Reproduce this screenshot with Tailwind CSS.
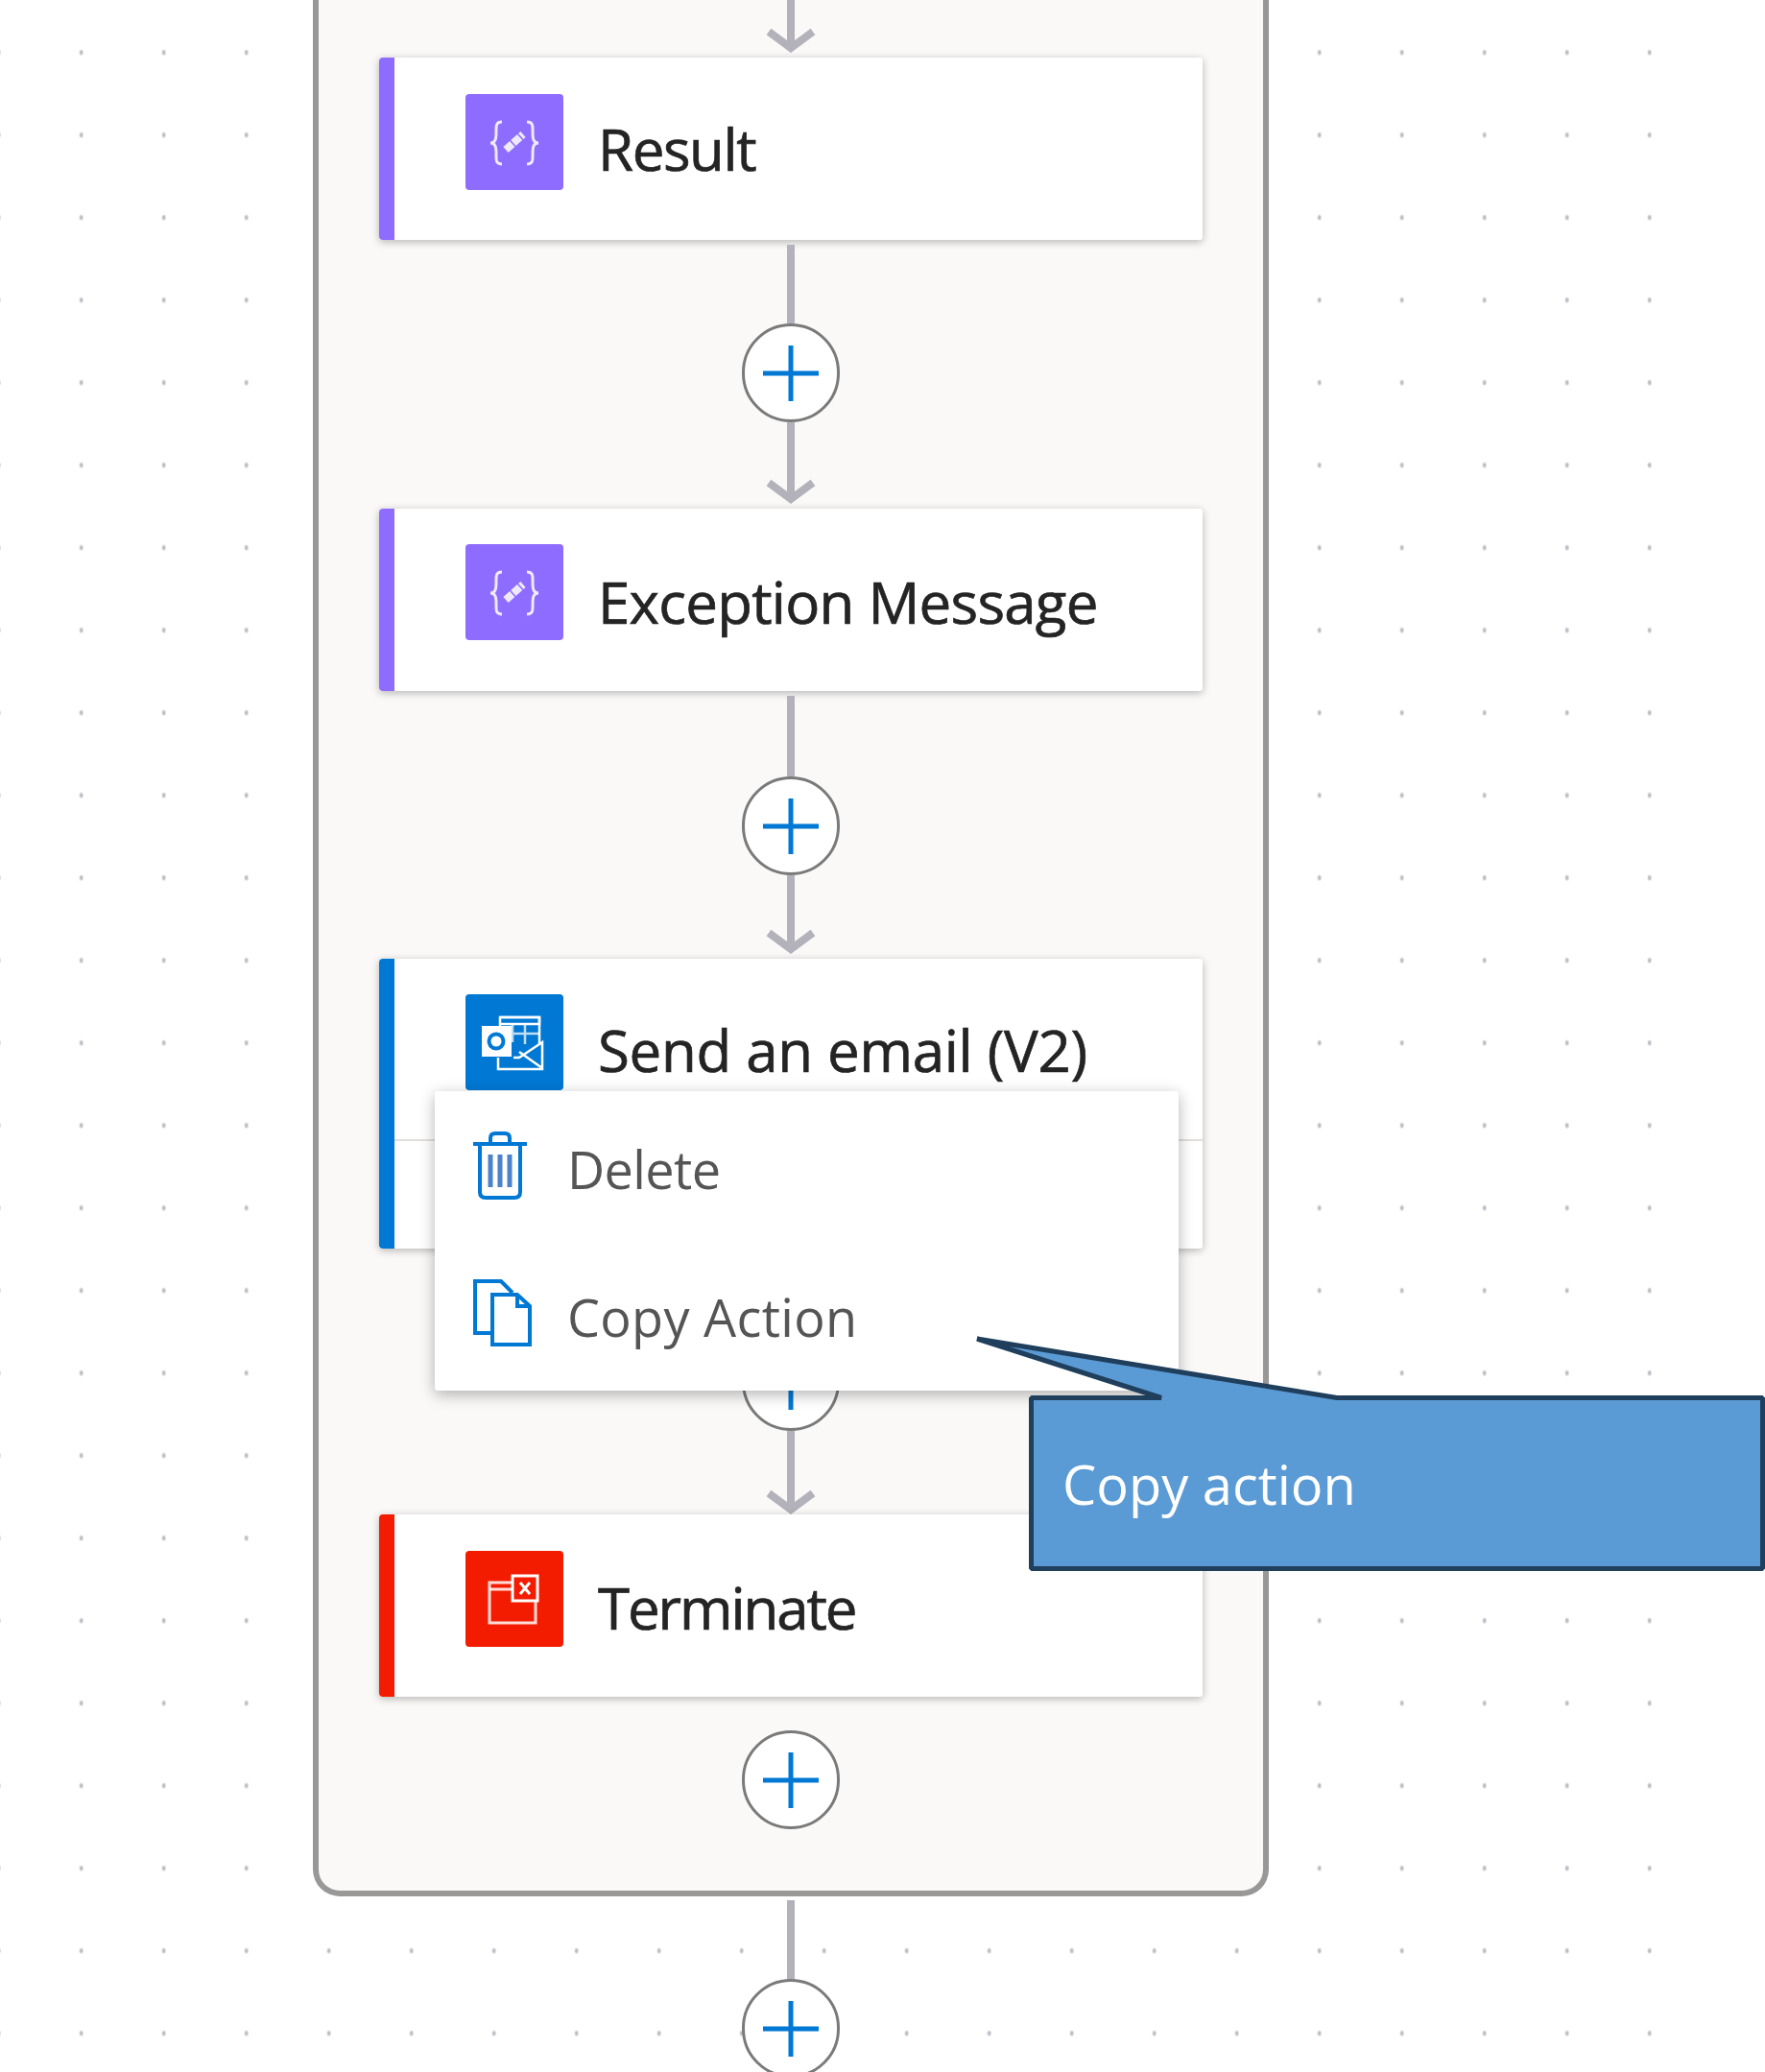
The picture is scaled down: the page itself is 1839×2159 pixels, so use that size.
<!DOCTYPE html>
<html lang="en">
<head>
    <meta charset="UTF-8">
    <title>Copy action</title>
    <script src="https://cdn.jsdelivr.net/npm/@tailwindcss/browser@4"></script>
</head>
<body class="m-0">
<div class="relative w-[1839px] h-[2159px] overflow-hidden bg-white font-['Open_Sans',sans-serif] bg-[radial-gradient(ellipse_2.5px_3.5px_at_center,#b4b3bb_0%,#c4c3ca_55%,transparent_100%)] bg-[size:86px_86px] bg-[position:41.7px_11.7px]">

    <!-- canvas dots stop before the right edge -->
    <div class="absolute right-0 top-0 w-[80px] h-[2159px] bg-white"></div>

    <!-- scope box -->
    <div class="relative ml-[326px] w-[996px] h-[1976px] flex flex-col items-center bg-[#faf9f8] border-x-[6px] border-b-[6px] border-[#999897] rounded-b-[28px]">
        <svg class="block w-[54px] h-[60px]" viewBox="0 0 54 60" fill="none" stroke="#b3b2ba" stroke-width="8"><path d="M27 0V50"/><path d="M4 33L27 50L50 33"/></svg>

        <!-- Result -->
        <div class="flex w-[858px] h-[190px] shrink-0 bg-white rounded-[3px] shadow-[0_2px_8px_rgba(0,0,0,0.28)]">
            <div class="w-[16px] bg-[#8e6cff] rounded-l-[4px]"></div>
            <div class="ml-[74px] mt-[38px] w-[102px] h-[100px] bg-[#8e6cff] rounded-[4px]">
                <svg class="w-[102px] h-[100px]" viewBox="0 0 102 100" fill="none" stroke="#fff" stroke-opacity="0.85" stroke-width="3"><path d="M38 29C31 29 32 34 32 40C32 47 31 51 26 51C31 51 32 55 32 62C32 68 31 73 38 73"/><path d="M64 29C71 29 70 34 70 40C70 47 71 51 76 51C71 51 70 55 70 62C70 68 71 73 64 73"/><path d="M42 58L60 42" stroke-width="8" stroke-dasharray="9 1.5"/></svg>
            </div>
            <div class="ml-[36px] mt-[55px] text-[60px] leading-[80px] font-medium [-webkit-text-stroke:0.7px_#242424] text-[#242424] tracking-[-1.4px]">Result</div>
        </div>

        <div class="flex flex-col items-center h-[280px] shrink-0 pt-[5px]">
            <div class="w-2 h-[82px] bg-[#b3b2ba]"></div>
            <div class="flex items-center justify-center w-[102px] h-[103px] shrink-0 bg-white rounded-full border-[3px] border-[#7a7a7a]">
                <svg class="w-[60px] h-[60px]" viewBox="0 0 60 60" fill="none" stroke="#0078d4" stroke-width="5"><path d="M30 1V59M1 30H59"/></svg>
            </div>
            <svg class="block w-[54px] h-[90px]" viewBox="0 0 54 90" fill="none" stroke="#b3b2ba" stroke-width="8"><path d="M27 0V80"/><path d="M4 63L27 80L50 63"/></svg>
        </div>

        <!-- Exception Message -->
        <div class="flex w-[858px] h-[190px] shrink-0 bg-white rounded-[3px] shadow-[0_2px_8px_rgba(0,0,0,0.28)]">
            <div class="w-[16px] bg-[#8e6cff] rounded-l-[4px]"></div>
            <div class="ml-[74px] mt-[37px] w-[102px] h-[100px] bg-[#8e6cff] rounded-[4px]">
                <svg class="w-[102px] h-[100px]" viewBox="0 0 102 100" fill="none" stroke="#fff" stroke-opacity="0.85" stroke-width="3"><path d="M38 29C31 29 32 34 32 40C32 47 31 51 26 51C31 51 32 55 32 62C32 68 31 73 38 73"/><path d="M64 29C71 29 70 34 70 40C70 47 71 51 76 51C71 51 70 55 70 62C70 68 71 73 64 73"/><path d="M42 58L60 42" stroke-width="8" stroke-dasharray="9 1.5"/></svg>
            </div>
            <div class="ml-[36px] mt-[57px] text-[60px] leading-[80px] font-medium [-webkit-text-stroke:0.7px_#242424] text-[#242424] tracking-[-0.75px] whitespace-nowrap">Exception Message</div>
        </div>

        <div class="flex flex-col items-center h-[279px] shrink-0 pt-[5px]">
            <div class="w-2 h-[84px] bg-[#b3b2ba]"></div>
            <div class="flex items-center justify-center w-[102px] h-[103px] shrink-0 bg-white rounded-full border-[3px] border-[#7a7a7a]">
                <svg class="w-[60px] h-[60px]" viewBox="0 0 60 60" fill="none" stroke="#0078d4" stroke-width="5"><path d="M30 1V59M1 30H59"/></svg>
            </div>
            <svg class="block w-[54px] h-[87px]" viewBox="0 0 54 87" fill="none" stroke="#b3b2ba" stroke-width="8"><path d="M27 0V77"/><path d="M4 60L27 77L50 60"/></svg>
        </div>

        <!-- Send an email -->
        <div class="flex flex-col w-[858px] h-[302px] shrink-0 bg-white rounded-[3px] shadow-[0_2px_8px_rgba(0,0,0,0.28)] relative">
            <div class="flex h-[190px] shrink-0 border-b-2 border-[#e1dfdd] ml-[16px]">
                <div class="ml-[74px] mt-[37px] w-[102px] h-[100px] bg-[#0078d4] rounded-[4px]">
                    <svg class="w-[102px] h-[100px]" viewBox="0 0 102 100" fill="none" stroke="#fff" stroke-width="2.5"><path d="M36 34V24H77V52"/><path d="M36 24H77V31H36"/><path d="M49 31V50M62 31V52M48 41H77" stroke-opacity="0.75"/><path d="M34 66V78H80V50L56 66H50"/><path d="M56 60L80 77"/><rect x="17" y="33" width="31" height="32" fill="#fff" stroke="none"/><circle cx="32" cy="49" r="7.5" stroke="#0078d4" stroke-width="4"/></svg>
                </div>
                <div class="ml-[36px] mt-[55px] text-[60px] leading-[80px] font-medium [-webkit-text-stroke:0.7px_#242424] text-[#242424] tracking-[-0.3px] whitespace-nowrap">Send an email (V2)</div>
            </div>
            <div class="absolute left-0 top-0 w-[16px] h-[302px] bg-[#0078d4] rounded-l-[4px]"></div>
        </div>

        <div class="flex flex-col items-center h-[277px] shrink-0 pt-[5px]">
            <div class="w-2 h-[82px] bg-[#b3b2ba]"></div>
            <div class="flex items-center justify-center w-[102px] h-[103px] shrink-0 bg-white rounded-full border-[3px] border-[#7a7a7a]">
                <svg class="w-[60px] h-[60px]" viewBox="0 0 60 60" fill="none" stroke="#0078d4" stroke-width="5"><path d="M30 1V59M1 30H59"/></svg>
            </div>
            <svg class="block w-[54px] h-[87px]" viewBox="0 0 54 87" fill="none" stroke="#b3b2ba" stroke-width="8"><path d="M27 0V82"/><path d="M4 65L27 82L50 65"/></svg>
        </div>

        <!-- Terminate -->
        <div class="flex w-[858px] h-[190px] shrink-0 bg-white rounded-[3px] shadow-[0_2px_8px_rgba(0,0,0,0.28)]">
            <div class="w-[16px] bg-[#f41c00] rounded-l-[4px]"></div>
            <div class="ml-[74px] mt-[38px] w-[102px] h-[100px] bg-[#f41c00] rounded-[4px]">
                <svg class="w-[102px] h-[100px]" viewBox="0 0 102 100" fill="none" stroke="#fff" stroke-opacity="0.85" stroke-width="3"><path d="M48 33H25V75H73V53"/><path d="M25 40H48"/><rect x="49" y="26" width="26" height="26" stroke-opacity="1"/><path d="M57 33L67 45M67 33L57 45" stroke-opacity="1"/></svg>
            </div>
            <div class="ml-[36px] mt-[57px] text-[60px] leading-[80px] font-medium [-webkit-text-stroke:0.7px_#242424] text-[#242424] tracking-[-2.1px]">Terminate</div>
        </div>

        <div class="flex flex-col items-center pt-[35px]">
            <div class="flex items-center justify-center w-[102px] h-[103px] shrink-0 bg-white rounded-full border-[3px] border-[#7a7a7a]">
                <svg class="w-[60px] h-[60px]" viewBox="0 0 60 60" fill="none" stroke="#0078d4" stroke-width="5"><path d="M30 1V59M1 30H59"/></svg>
            </div>
        </div>
    </div>

    <!-- below the scope -->
    <div class="relative ml-[773px] w-[102px] flex flex-col items-center pt-[4px]">
        <div class="w-2 h-[82px] bg-[#b3b2ba]"></div>
        <div class="flex items-center justify-center w-[102px] h-[103px] shrink-0 bg-white rounded-full border-[3px] border-[#7a7a7a]">
            <svg class="w-[60px] h-[60px]" viewBox="0 0 60 60" fill="none" stroke="#0078d4" stroke-width="5"><path d="M30 1V59M1 30H59"/></svg>
        </div>
    </div>

    <!-- context menu -->
    <div class="absolute left-[453px] top-[1137px] w-[775px] h-[312px] pt-[4px] bg-white rounded-[3px] shadow-[0_4px_16px_rgba(0,0,0,0.3)]">
        <div class="flex items-center h-[154px] pl-[39px]">
            <svg class="w-[58px] h-[71px] shrink-0 -mt-[8px]" viewBox="0 0 58 71" fill="none" stroke="#0078d4" stroke-width="4"><path d="M1 13H57"/><path d="M19 12V7Q19 2 24 2H34Q39 2 39 7V12"/><path d="M8 13V63Q8 69 14 69H44Q50 69 50 63V13"/><path d="M19 24V58M29 24V58M39 24V58" stroke-width="5" stroke="#4a83c9"/></svg>
            <span class="ml-[41px] text-[54px] leading-[70px] text-[#555] tracking-[-0.6px]">Delete</span>
        </div>
        <div class="flex items-center h-[154px] pl-[39px]">
            <svg class="w-[62px] h-[70px] shrink-0 -mt-[8px]" viewBox="0 0 62 70" fill="none" stroke="#0078d4" stroke-width="4"><path d="M20 56H3V2H30L42 14"/><path d="M21 16V68H60V28L47 16Z" fill="#fff"/><path d="M47 16V28H60"/></svg>
            <span class="ml-[37px] text-[54px] leading-[70px] text-[#555] tracking-[0.3px] whitespace-nowrap">Copy Action</span>
        </div>
    </div>

    <!-- callout -->
    <svg class="absolute left-0 top-0 w-[1839px] h-[2159px]" viewBox="0 0 1839 2159" fill="#5b9bd5" stroke="#1f3f5c" stroke-width="5"><path d="M1074.5 1456.5H1210L1018 1395L1393 1456.5H1836.5V1634.5H1074.5Z" stroke-linejoin="bevel"/></svg>
    <div class="absolute left-[1107px] top-[1508px] text-[56px] leading-[76px] text-white whitespace-nowrap">Copy action</div>
</div>
</body>
</html>
